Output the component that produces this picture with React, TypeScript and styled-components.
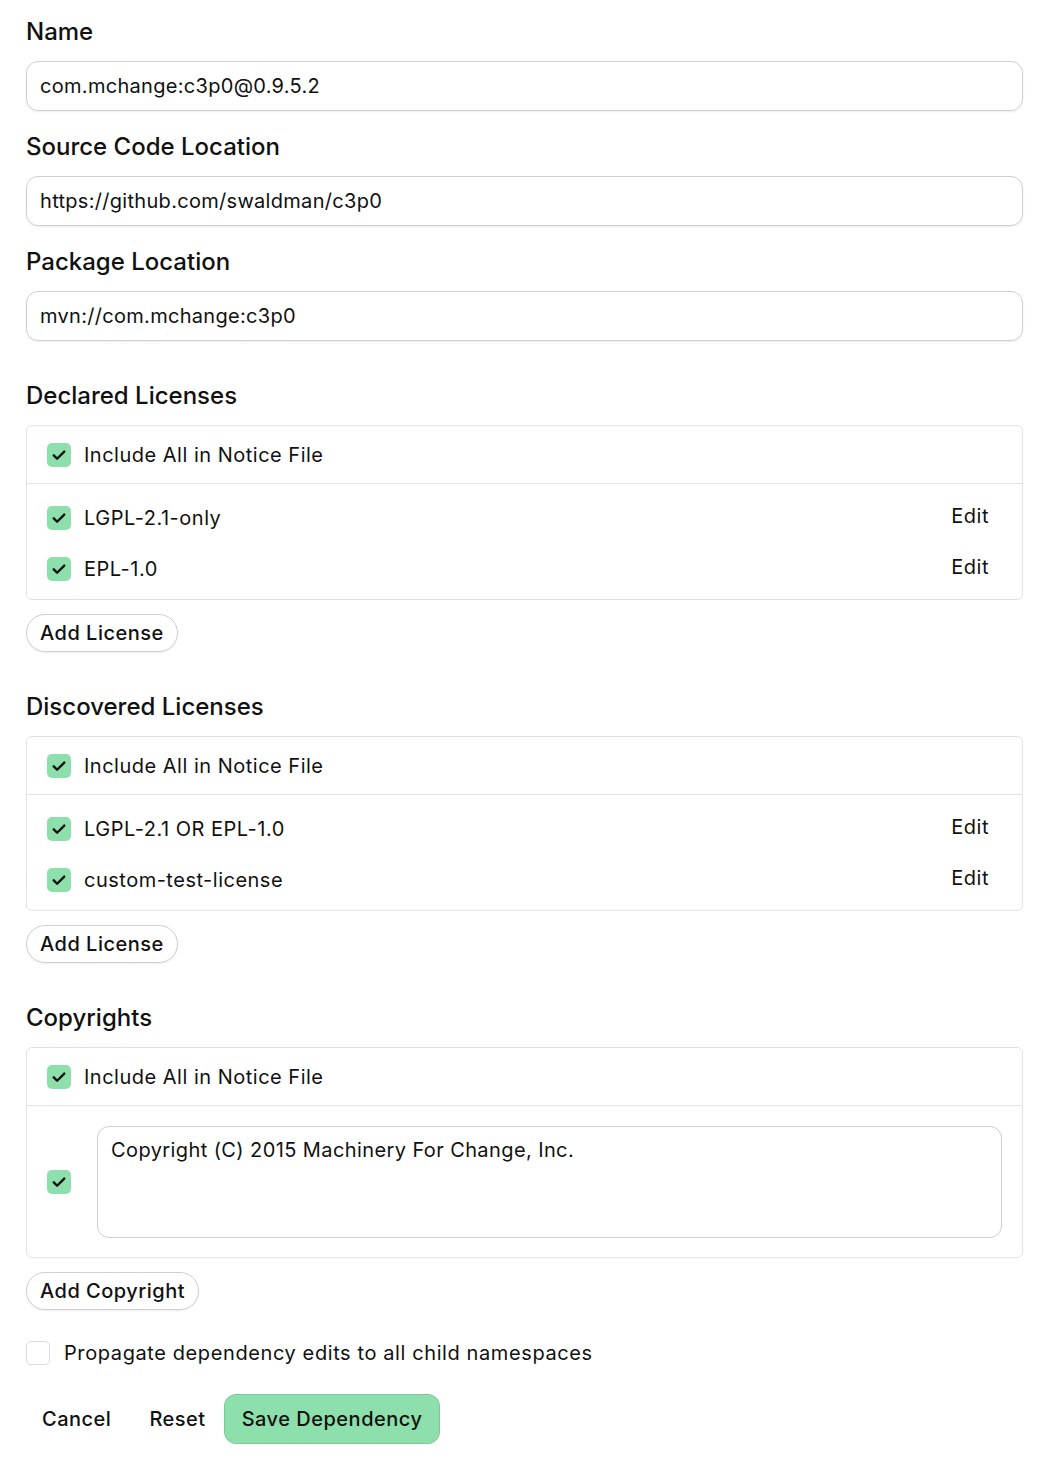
import React from "react";
import styled, { createGlobalStyle } from "styled-components";

const G = createGlobalStyle`
  body { margin: 0; background: #fff; font-family: Inter, "Noto Sans", sans-serif; color: #111; }
`;
const Page = styled.div`padding: 15px 29px 20px 26px; display: flex; flex-direction: column;`;
const Label = styled.div<{ $mt?: number }>`
  font-size: 24px; font-weight: 500; height: 34px; line-height: 34px; margin-top: ${p => p.$mt ?? 0}px; margin-bottom: 12px;
`;
const Input = styled.div`
  height: 48px; border: 1px solid #cfcfcf; border-radius: 12px; display: flex; align-items: center;
  padding: 0 13px; font-size: 20px; letter-spacing: 0.3px; box-shadow: 0 1px 2px rgba(0,0,0,0.08);
`;
const Box = styled.div`border: 1px solid #e3e3e3; border-radius: 6px; display: flex; flex-direction: column;`;
const Header = styled.div`height: 57px; border-bottom: 1px solid #e3e3e3; display: flex; align-items: center; padding-left: 20px; gap: 13px; font-size: 20px; letter-spacing: 0.5px;`;
const List = styled.div`padding: 22px 0 18px; display: flex; flex-direction: column; gap: 27px;`;
const Row = styled.div`height: 24px; display: flex; align-items: center; padding: 0 33px 0 20px; gap: 13px; font-size: 20px; letter-spacing: 0.5px;`;
const Grow = styled.span`flex: 1;`;
const Edit = styled.span`font-size: 20px; margin-top: -4px;`;
const Check = styled.span<{ $on?: boolean }>`
  width: 24px; height: 24px; border-radius: 5px; flex: none; display: flex; align-items: center; justify-content: center;
  background: ${p => (p.$on ? "#8de0ab" : "#fff")}; border: ${p => (p.$on ? "none" : "1px solid #dcdcdc")}; box-sizing: border-box;
`;
const Btn = styled.div`
  align-self: flex-start; height: 38px; box-sizing: border-box; border: 1px solid #cfcfcf; border-radius: 19px; padding: 0 13px;
  display: flex; align-items: center; font-size: 20px; font-weight: 500; letter-spacing: 0.5px; margin-top: 14px;
  box-shadow: 0 1px 2px rgba(0,0,0,0.08);
`;
const CopyRow = styled.div`display: flex; align-items: center; padding: 20px 20px 19px; gap: 26px;`;
const TextArea = styled.div`flex: 1; height: 112px; box-sizing: border-box; border: 1px solid #cfcfcf; border-radius: 12px; padding: 11px 13px; font-size: 20px; letter-spacing: 0.4px;`;
const Prop = styled.div`display: flex; align-items: center; gap: 14px; font-size: 20px; letter-spacing: 0.6px; margin-top: 31px;`;
const Actions = styled.div`display: flex; align-items: center; gap: 6px; margin-top: 29px;`;
const Plain = styled.div`padding: 0 16px; font-size: 20px; font-weight: 500; letter-spacing: 0.5px;`;
const Save = styled.div`height: 50px; box-sizing: border-box; background: #8de0ab; border: 1px solid #7cc999; border-radius: 12px; padding: 0 17px; display: flex; align-items: center; font-size: 20px; font-weight: 500; letter-spacing: 0.5px; margin-left: -4px;`;

const Tick = () => (
  <svg width="18" height="18" viewBox="0 0 24 24" fill="none" stroke="#111" strokeWidth="3.2" strokeLinecap="round" strokeLinejoin="round"><path d="M5 12.5l4.5 4.5L19 7.5" /></svg>
);
const C = () => <Check $on><Tick /></Check>;

const Section = ({ title, items, mt }: { title: string; items: string[]; mt: number }) => (
  <>
    <Label $mt={mt}>{title}</Label>
    <Box>
      <Header><C />Include All in Notice File</Header>
      <List>
        {items.map(i => <Row key={i}><C /><Grow>{i}</Grow><Edit>Edit</Edit></Row>)}
      </List>
    </Box>
    <Btn>Add License</Btn>
  </>
);

export default function App() {
  return (
    <Page>
      <G />
      <Label>Name</Label>
      <Input>com.mchange:c3p0@0.9.5.2</Input>
      <Label $mt={19}>Source Code Location</Label>
      <Input>https://github.com/swaldman/c3p0</Input>
      <Label $mt={19}>Package Location</Label>
      <Input>mvn://com.mchange:c3p0</Input>
      <Section title="Declared Licenses" items={["LGPL-2.1-only", "EPL-1.0"]} mt={38} />
      <Section title="Discovered Licenses" items={["LGPL-2.1 OR EPL-1.0", "custom-test-license"]} mt={38} />
      <Label $mt={38}>Copyrights</Label>
      <Box>
        <Header><C />Include All in Notice File</Header>
        <CopyRow><C /><TextArea>Copyright (C) 2015 Machinery For Change, Inc.</TextArea></CopyRow>
      </Box>
      <Btn>Add Copyright</Btn>
      <Prop><Check />Propagate dependency edits to all child namespaces</Prop>
      <Actions><Plain>Cancel</Plain><Plain>Reset</Plain><Save>Save Dependency</Save></Actions>
    </Page>
  );
}
